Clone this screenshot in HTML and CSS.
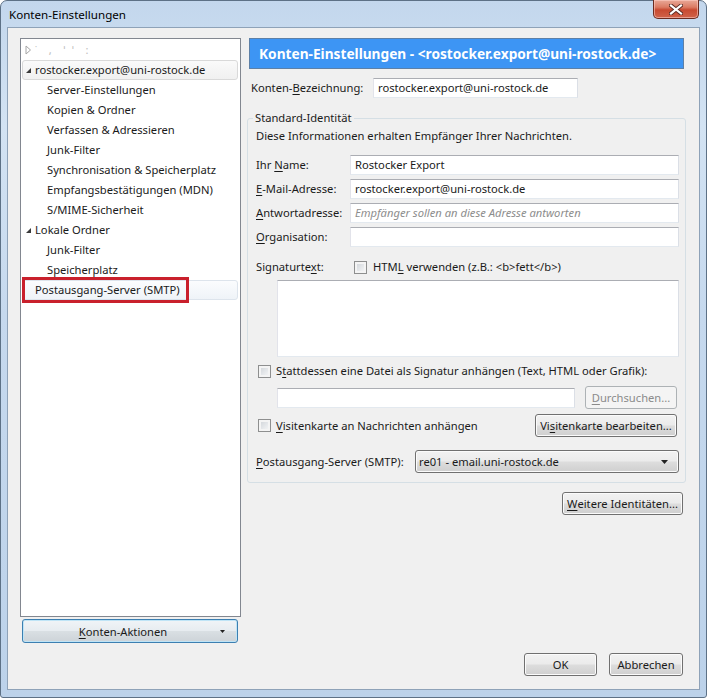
FILE: index.html
```html
<!DOCTYPE html>
<html lang="de">
<head>
<meta charset="utf-8">
<title>Konten-Einstellungen</title>
<link rel="stylesheet" href="styles.css">
</head>
<body>
<div class="window">
  <div class="titlebar">
    <span class="title">Konten-Einstellungen</span>
    <div class="close">
      <svg width="14" height="11" viewBox="0 0 14 11"><path d="M2 1.5 L12 9.5 M12 1.5 L2 9.5" stroke="#5a2a22" stroke-width="4" stroke-linecap="square"/><path d="M2 1.5 L12 9.5 M12 1.5 L2 9.5" stroke="#ffffff" stroke-width="2.2" stroke-linecap="square"/></svg>
    </div>
  </div>
  <div class="client">
    <div class="panes">
      <div class="left">
        <div class="tree">
          <div class="row top">
            <svg class="arrow" width="7" height="10" viewBox="0 0 7 10"><path d="M1 1 L5.5 5 L1 9 Z" fill="none" stroke="#a6a6a6" stroke-width="1"/></svg>
            <span class="hidden-text">˙ &nbsp;, &nbsp;ˈ ˈ &nbsp;:</span>
          </div>
          <div class="row top sel">
            <svg class="arrow" width="7" height="10" viewBox="0 0 7 10"><path d="M6 3 L6 8 L1 8 Z" fill="#3a3a3a"/></svg>
            <span>rostocker.export@uni-rostock.de</span>
          </div>
          <div class="row child">Server-Einstellungen</div>
          <div class="row child">Kopien &amp; Ordner</div>
          <div class="row child">Verfassen &amp; Adressieren</div>
          <div class="row child">Junk-Filter</div>
          <div class="row child">Synchronisation &amp; Speicherplatz</div>
          <div class="row child">Empfangsbestätigungen (MDN)</div>
          <div class="row child">S/MIME-Sicherheit</div>
          <div class="row top">
            <svg class="arrow" width="7" height="10" viewBox="0 0 7 10"><path d="M6 3 L6 8 L1 8 Z" fill="#3a3a3a"/></svg>
            <span>Lokale Ordner</span>
          </div>
          <div class="row child">Junk-Filter</div>
          <div class="row child">Speicherplatz</div>
          <div class="row leaf sel hl">
            <span>Postausgang-Server (SMTP)</span>
            <span class="redmark"></span>
          </div>
        </div>
        <button class="btn default menubtn"><span class="menulabel"><u>K</u>onten-Aktionen</span><svg class="drop" width="5" height="3" viewBox="0 0 5 3"><path d="M0 0 L5 0 L2.5 3 Z" fill="#222"/></svg></button>
      </div>
      <div class="right">
        <div class="banner">Konten-Einstellungen - &lt;rostocker.export@uni-rostock.de&gt;</div>
        <div class="bez">
          <label class="bezlabel">Konten-<u>B</u>ezeichnung:</label>
          <div class="input bezinput">rostocker.export@uni-rostock.de</div>
        </div>
        <fieldset class="group">
          <legend>Standard-Identität</legend>
          <div class="info">Diese Informationen erhalten Empfänger Ihrer Nachrichten.</div>
          <div class="fields">
            <div class="frow"><label class="flabel">Ihr <u>N</u>ame:</label><div class="input grow">Rostocker Export</div></div>
            <div class="frow"><label class="flabel"><u>E</u>-Mail-Adresse:</label><div class="input grow">rostocker.export@uni-rostock.de</div></div>
            <div class="frow"><label class="flabel"><u>A</u>ntwortadresse:</label><div class="input grow placeholder">Empfänger sollen an diese Adresse antworten</div></div>
            <div class="frow"><label class="flabel"><u>O</u>rganisation:</label><div class="input grow"></div></div>
          </div>
          <div class="sigrow">
            <label class="flabel">Signaturte<u>x</u>t:</label>
            <span class="check sigcheck"></span>
            <span>HTM<u>L</u> verwenden (z.B.: &lt;b&gt;fett&lt;/b&gt;)</span>
          </div>
          <div class="textarea"></div>
          <div class="checkrow attach">
            <span class="check"></span>
            <span>S<u>t</u>attdessen eine Datei als Signatur anhängen (Text, HTML oder Grafik):</span>
          </div>
          <div class="filerow">
            <div class="input fileinput"></div>
            <button class="btn disabled browse"><u>D</u>urchsuchen...</button>
          </div>
          <div class="vcardrow">
            <span class="check"></span>
            <span class="vcardlabel"><u>V</u>isitenkarte an Nachrichten anhängen</span>
            <button class="btn vcardbtn">Vi<u>s</u>itenkarte bearbeiten...</button>
          </div>
          <div class="smtprow">
            <label class="smtplabel"><u>P</u>ostausgang-Server (SMTP):</label>
            <div class="btn select"><span>re01 - email.uni-rostock.de</span><svg class="drop" width="7" height="4" viewBox="0 0 7 4"><path d="M0 0 L7 0 L3.5 4 Z" fill="#222"/></svg></div>
          </div>
        </fieldset>
        <button class="btn more"><u>W</u>eitere Identitäten...</button>
      </div>
    </div>
    <div class="footer">
      <button class="btn ok">OK</button>
      <button class="btn cancel">Abbrechen</button>
    </div>
  </div>
</div>
</body>
</html>
```

FILE: styles.css
```css
* { box-sizing: border-box; }
html, body { margin: 0; padding: 0; }
body {
  width: 707px;
  height: 698px;
  overflow: hidden;
  background: #ffffff;
  font-family: "Noto Sans", "Open Sans", sans-serif;
  font-size: 11.2px;
  line-height: 16px;
  color: #1a1a1a;
}
u { text-decoration: underline; text-underline-offset: 2px; }

.window {
  width: 707px;
  height: 698px;
  display: flex;
  flex-direction: column;
  border: 1px solid #5d7186;
  border-radius: 7px 7px 3px 3px;
  background: linear-gradient(180deg, #c3d7ed 0%, #d3e3f3 18%, #c6d9ee 45%, #bcd2ea 100%);
}

.titlebar {
  height: 26px;
  display: flex;
  flex: none;
}
.title {
  padding: 6px 0 0 8px;
  line-height: 16px;
  font-size: 11.6px;
  color: #000;
}
.close {
  margin-left: auto;
  margin-right: 7px;
  margin-top: -1px;
  width: 46px;
  height: 19px;
  border: 1px solid #6b2b20;
  border-top: none;
  border-radius: 0 0 5px 5px;
  background: linear-gradient(180deg, #e9a998 0%, #db7b64 40%, #c84a31 55%, #d0634a 100%);
  box-shadow: inset 0 0 0 1px rgba(255, 210, 200, 0.55);
  display: flex;
  align-items: center;
  justify-content: center;
}

.client {
  flex: 1;
  margin: 0 6px 7px 6px;
  border: 1px solid #8ea2b8;
  background: #f0f0f0;
  padding: 10px 13px 0 12px;
  display: flex;
  flex-direction: column;
}

.panes {
  display: flex;
  align-items: flex-start;
}

.left {
  width: 221px;
  display: flex;
  flex-direction: column;
}
.tree {
  height: 579px;
  background: #ffffff;
  border: 1px solid #828790;
  padding-top: 1px;
}
.row {
  position: relative;
  height: 20px;
  margin: 0 2px 0 1px;
  border: 1px solid transparent;
  border-radius: 3px;
  display: flex;
  align-items: center;
  white-space: nowrap;
  color: #1a1a1a;
}
.row.top { padding-left: 2px; }
.row.child { padding-left: 24px; }
.row.leaf { padding-left: 12px; }
.arrow { width: 7px; height: 10px; margin-right: 3px; flex: none; }
.row.sel {
  border-color: #d9d9d9;
  background: linear-gradient(180deg, #fafafa 0%, #f0f0f0 100%);
}
.row.hl {
  border-color: #dde4ec;
  background: linear-gradient(180deg, #fbfcfe 0%, #eff3f8 100%);
}
.hidden-text { color: #bdbdbd; letter-spacing: 2px; font-size: 11px; }
.redmark {
  position: absolute;
  left: -1px;
  top: -4px;
  width: 167px;
  height: 26px;
  border: 3px solid #c9202c;
}

.btn {
  font-family: inherit;
  font-size: 11.2px;
  color: #1a1a1a;
  height: 23px;
  padding: 0;
  border: 1px solid #707070;
  border-radius: 3px;
  background: linear-gradient(180deg, #f2f2f2 0%, #ebebeb 48%, #dddddd 52%, #cfcfcf 100%);
  box-shadow: inset 0 0 0 1px #fbfbfb;
  display: flex;
  align-items: center;
  justify-content: center;
  white-space: nowrap;
}
.btn.default {
  border-color: #3c7fb1;
  box-shadow: inset 0 0 0 1px #bfe4f6;
  background: linear-gradient(180deg, #f0f4f7 0%, #e7ecf0 48%, #d9dfe3 52%, #cdd3d8 100%);
}
.btn.disabled {
  color: #8b8b8b;
  border-color: #adb2b5;
  background: #f4f4f4;
  box-shadow: none;
}

.menubtn {
  margin: 2px 0 0 2px;
  width: 216px;
  height: 24px;
  position: relative;
}
.menulabel { margin-right: 14px; }
.menubtn .drop { position: absolute; right: 12px; top: 10px; }

.right {
  margin-left: 6px;
  width: 439px;
  display: flex;
  flex-direction: column;
}
.banner {
  margin: 0 2px;
  height: 31px;
  border: 1px solid #5d80a7;
  background: #3d95f4;
  color: #ffffff;
  font-weight: bold;
  font-size: 13.7px;
  padding-left: 9px;
  display: flex;
  align-items: center;
  white-space: nowrap;
}
.bez {
  margin-top: 9px;
  display: flex;
  align-items: center;
}
.bezlabel { margin-left: 4px; width: 122px; }
.input {
  height: 20px;
  background: #ffffff;
  border: 1px solid;
  border-color: #abadb3 #dbdfe6 #e3e9ef #e2e3ea;
  padding: 0 4px;
  display: flex;
  align-items: center;
  white-space: nowrap;
  overflow: hidden;
}
.bezinput { width: 205px; }

.group {
  margin: 12px 0 0 0;
  padding: 0 6px 9px 8px;
  border: 1px solid #d5dfe5;
  border-radius: 3px;
  min-width: 0;
}
.group legend {
  padding: 0 2px;
  margin-left: -3px;
  line-height: 16px;
}
.info { line-height: 16px; margin-top: 2px; }
.fields {
  margin-top: 11px;
  display: flex;
  flex-direction: column;
  gap: 4px;
}
.frow { display: flex; align-items: center; }
.flabel { width: 94px; flex: none; }
.grow { flex: 1; }
.placeholder { color: #8d8d8d; font-style: italic; }

.check {
  width: 13px;
  height: 13px;
  flex: none;
  border: 1px solid #8e8f8f;
  background: linear-gradient(135deg, #cdd1d6 0%, #eceef0 70%, #f7f7f7 100%);
  box-shadow: inset 0 0 0 2px #f4f4f4;
}
.sigrow {
  margin-top: 12px;
  height: 16px;
  display: flex;
  align-items: center;
}
.sigcheck { margin: 0 6px 0 4px; }
.textarea {
  margin: 5px 0 0 21px;
  height: 77px;
  background: #ffffff;
  border: 1px solid;
  border-color: #abadb3 #dbdfe6 #e3e9ef #e2e3ea;
}
.checkrow {
  margin-top: 6px;
  height: 16px;
  display: flex;
  align-items: center;
}
.checkrow .check, .vcardrow .check { margin: 0 5px 0 2px; }
.filerow {
  margin-top: 7px;
  display: flex;
  align-items: center;
}
.fileinput { margin-left: 21px; width: 298px; }
.browse { margin-left: 10px; width: 92px; }
.vcardrow {
  margin-top: 5px;
  display: flex;
  align-items: center;
}
.vcardbtn { margin-left: auto; margin-right: 2px; width: 142px; }
.smtprow {
  margin-top: 13px;
  display: flex;
  align-items: center;
}
.smtplabel { width: 159px; flex: none; }
.select {
  flex: 1;
  justify-content: space-between;
  padding: 0 10px 0 3px;
  border-color: #707070;
}

.more {
  margin-top: 9px;
  align-self: flex-end;
  margin-right: 3px;
  width: 121px;
}

.footer {
  margin-top: 10px;
  margin-right: 3px;
  display: flex;
  justify-content: flex-end;
  gap: 12px;
}
.ok { width: 73px; }
.cancel { width: 74px; }
```
